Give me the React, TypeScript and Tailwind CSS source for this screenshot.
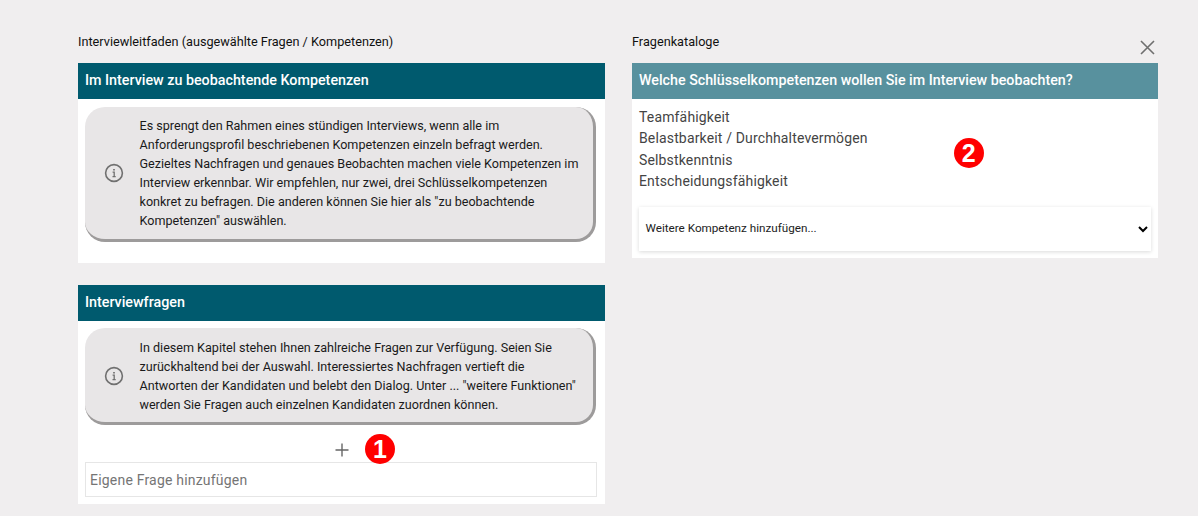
import React from "react";

function InfoIcon() {
  return (
    <svg width="20" height="20" viewBox="0 0 20 20" fill="none" stroke="#707070" className="shrink-0">
      <circle cx="10" cy="10" r="8.4" strokeWidth="1.6" />
      <path d="M8.6 9.2h1.6v4.4M8.5 13.7h3.2" strokeWidth="1.3" />
      <path d="M10 6v1.6" strokeWidth="1.7" />
    </svg>
  );
}

function InfoBox({ lines, spacing }: { lines: string[]; spacing: string }) {
  return (
    <div className={`flex items-center bg-[#e8e6e7] rounded-[20px] border-r-[3px] border-b-[3px] border-[#9d9b9b] pl-[19px] pr-[13px] ${spacing}`}>
      <InfoIcon />
      <div className="ml-[15.5px] text-[12.58px] leading-[19px] text-[#1a1a1a]">
        {lines.map((l) => (
          <div key={l} className="whitespace-nowrap">{l}</div>
        ))}
      </div>
    </div>
  );
}

function Badge({ n }: { n: string }) {
  return (
    <span className="w-[30px] h-[30px] rounded-full bg-[#ff0000] text-white flex items-center justify-center text-[25px] font-bold font-['Liberation_Sans',sans-serif] leading-none">
      {n}
    </span>
  );
}

export default function App() {
  return (
    <div className="w-[1198px] h-[516px] overflow-hidden bg-[#f0eeef] font-['Roboto',sans-serif] flex pl-[78px] pt-[34px] gap-[27px]">
      <div className="w-[527px] flex flex-col">
        <div className="h-[29px] text-[12.7px] leading-[15px] text-[#111]">
          Interviewleitfaden (ausgewählte Fragen / Kompetenzen)
        </div>
        <div className="h-[36px] bg-[#005a6e] text-white text-[14.3px] font-medium flex items-center px-[7px]">
          Im Interview zu beobachtende Kompetenzen
        </div>
        <div className="bg-white h-[164px] pl-[7px] pr-[9px] pt-[8px]">
          <InfoBox
            spacing="pt-[9px] pb-[9px]"
            lines={[
              "Es sprengt den Rahmen eines stündigen Interviews, wenn alle im",
              "Anforderungsprofil beschriebenen Kompetenzen einzeln befragt werden.",
              "Gezieltes Nachfragen und genaues Beobachten machen viele Kompetenzen im",
              "Interview erkennbar. Wir empfehlen, nur zwei, drei Schlüsselkompetenzen",
              "konkret zu befragen. Die anderen können Sie hier als \"zu beobachtende",
              "Kompetenzen\" auswählen.",
            ]}
          />
        </div>
        <div className="mt-[22px] h-[36px] bg-[#005a6e] text-white text-[14.3px] font-medium flex items-center px-[7px]">
          Interviewfragen
        </div>
        <div className="bg-white h-[183px] pl-[7px] pr-[8px] pt-[7px] flex flex-col">
          <div className="pr-px">
            <InfoBox
              spacing="pt-[10px] pb-[8px]"
              lines={[
                "In diesem Kapitel stehen Ihnen zahlreiche Fragen zur Verfügung. Seien Sie",
                "zurückhaltend bei der Auswahl. Interessiertes Nachfragen vertieft die",
                "Antworten der Kandidaten und belebt den Dialog. Unter ... \"weitere Funktionen\"",
                "werden Sie Fragen auch einzelnen Kandidaten zuordnen können.",
              ]}
            />
          </div>
          <div className="h-[37px] relative pt-[18px] pl-[250px]">
            <svg width="14" height="14" viewBox="0 0 14 14" stroke="#666" strokeWidth="1.4">
              <path d="M7 0.5v13M0.5 7h13" />
            </svg>
            <div className="absolute left-[280px] top-[9px]">
              <Badge n="1" />
            </div>
          </div>
          <input
            readOnly
            placeholder="Eigene Frage hinzufügen"
            className="h-[35px] w-full border border-[#e6e6e6] bg-white px-[4px] text-[14px] tracking-[0.2px] outline-none placeholder:text-[#757575]"
          />
        </div>
      </div>

      <div className="w-[526px] flex flex-col">
        <div className="h-[29px] flex justify-between">
          <span className="text-[12.7px] leading-[15px] text-[#111]">Fragenkataloge</span>
          <svg width="15" height="15" viewBox="0 0 15 15" stroke="#6f6f6f" strokeWidth="1.6" className="mt-[6px] mr-[3px]">
            <path d="M1 1l13 13M14 1L1 14" />
          </svg>
        </div>
        <div className="h-[36px] bg-[#58919e] text-white text-[14.25px] font-medium flex items-center px-[7px]">
          Welche Schlüsselkompetenzen wollen Sie im Interview beobachten?
        </div>
        <div className="bg-white h-[159px] px-[7px] pt-[8px] flex flex-col">
          <div className="flex">
            <div className="text-[14px] leading-[21.3px] tracking-[0.15px] text-[#444]">
              <div>Teamfähigkeit</div>
              <div>Belastbarkeit / Durchhaltevermögen</div>
              <div>Selbstkenntnis</div>
              <div>Entscheidungsfähigkeit</div>
            </div>
            <div className="ml-[86px] mt-[31px]">
              <Badge n="2" />
            </div>
          </div>
          <div className="mt-[15px] h-[44px] shadow-[0_1px_4px_rgba(0,0,0,0.15)] bg-white flex items-center justify-between pl-[6.5px] pr-[3px]">
            <span className="text-[11.7px] text-[#222]">Weitere Kompetenz hinzufügen...</span>
            <svg width="10" height="7" viewBox="0 0 10 7" fill="none" stroke="#000" strokeWidth="2">
              <path d="M1 1l4 4 4-4" />
            </svg>
          </div>
        </div>
      </div>
    </div>
  );
}
